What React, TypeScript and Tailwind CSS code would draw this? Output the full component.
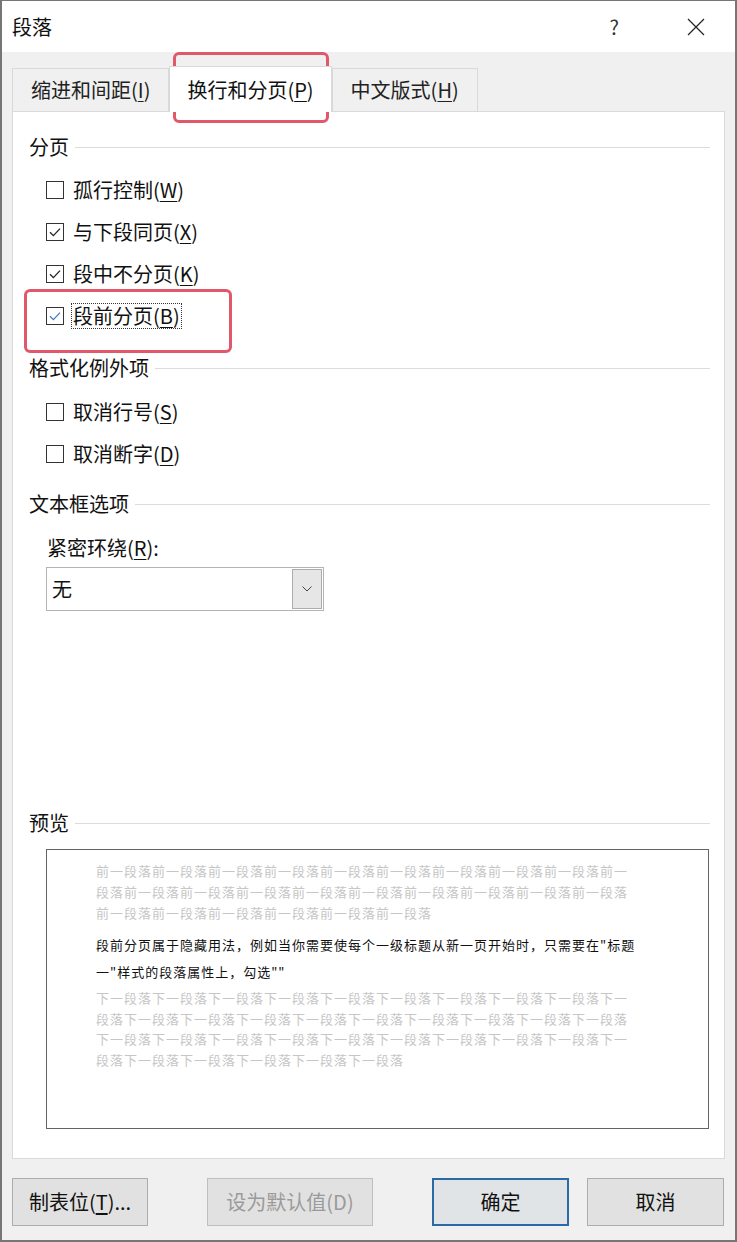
import React from "react";

const font = { fontFamily: '"Microsoft YaHei", "Noto Sans CJK SC", "Noto Sans", sans-serif' };

const before = [
  "前一段落前一段落前一段落前一段落前一段落前一段落前一段落前一段落前一段落前一",
  "段落前一段落前一段落前一段落前一段落前一段落前一段落前一段落前一段落前一段落",
  "前一段落前一段落前一段落前一段落前一段落前一段落",
];
const after = [
  "下一段落下一段落下一段落下一段落下一段落下一段落下一段落下一段落下一段落下一",
  "段落下一段落下一段落下一段落下一段落下一段落下一段落下一段落下一段落下一段落",
  "下一段落下一段落下一段落下一段落下一段落下一段落下一段落下一段落下一段落下一",
  "段落下一段落下一段落下一段落下一段落下一段落",
];

function Label({ text, hot, rest }: { text: string; hot: string; rest?: string }) {
  return (
    <span>
      {text}(<span className="underline underline-offset-[3px] decoration-1">{hot}</span>){rest}
    </span>
  );
}

function GroupHeader({ title }: { title: string }) {
  return (
    <div className="flex items-center h-[28px] pl-[16px] pr-[14px]">
      <span className="text-[20px] leading-none text-[#111]">{title}</span>
      <div className="flex-1 h-px bg-[#dcdcdc] ml-[6px]" />
    </div>
  );
}

function CheckRow({
  checked,
  text,
  hot,
  focused,
}: {
  checked?: boolean;
  text: string;
  hot: string;
  focused?: boolean;
}) {
  return (
    <div className="flex items-center h-[42px] pl-[33px]">
      <div className="w-[18px] h-[18px] border border-[#333] bg-white flex items-center justify-center">
        {checked && (
          <svg width="14" height="14" viewBox="0 0 14 14">
            <path
              d="M2 7.2 L5.4 10.6 L12 3.6"
              fill="none"
              stroke={focused ? "#3f7fb8" : "#222"}
              strokeWidth="1.3"
            />
          </svg>
        )}
      </div>
      <div
        className={`ml-[8px] text-[20px] leading-none text-[#111] px-[1px] py-[2px] ${
          focused ? "outline-1 outline-dotted outline-[#333]" : ""
        }`}
      >
        <Label text={text} hot={hot} />
      </div>
    </div>
  );
}

function Tab({ children, active }: { children: React.ReactNode; active?: boolean }) {
  return (
    <div
      className={
        active
          ? "h-[46px] -mb-px bg-white border border-b-0 border-[#d9d9d9] flex items-center justify-center px-[17px] text-[20px] leading-none z-10"
          : "h-[43px] bg-[#f0f0f0] border border-b-0 border-[#d9d9d9] flex items-center justify-center px-[18px] text-[20px] leading-none text-[#222]"
      }
    >
      {children}
    </div>
  );
}

export default function App() {
  return (
    <div style={font} className="relative w-[737px] h-[1242px] bg-[#f0f0f0] border-t border-l-2 border-r-2 border-b-2 border-[#767676] overflow-hidden text-[#111]">
      {/* title bar */}
      <div className="h-[51px] bg-white flex items-center pl-[10px]">
        <span className="text-[20px] leading-none">段落</span>
        <span className="ml-auto text-[20px] leading-none text-[#333] mr-[68px]">?</span>
        <svg width="18" height="18" viewBox="0 0 18 18" className="mr-[30px]">
          <path d="M1 1 L17 17 M17 1 L1 17" stroke="#222" strokeWidth="1.2" />
        </svg>
      </div>

      {/* tabs */}
      <div className="flex items-end pt-[16px] pl-[10px] h-[59px]">
        <Tab>
          <Label text="缩进和间距" hot="I" />
        </Tab>
        <Tab active>
          <Label text="换行和分页" hot="P" />
        </Tab>
        <Tab>
          <Label text="中文版式" hot="H" />
        </Tab>
      </div>

      {/* panel */}
      <div className="mx-[10px] bg-white border border-[#d9d9d9] h-[1048px] pt-[21px]">
        <GroupHeader title="分页" />
        <div className="mt-[8px]">
          <CheckRow text="孤行控制" hot="W" />
          <CheckRow checked text="与下段同页" hot="X" />
          <CheckRow checked text="段中不分页" hot="K" />
          <CheckRow checked focused text="段前分页" hot="B" />
        </div>

        <div className="mt-[17px]">
          <GroupHeader title="格式化例外项" />
        </div>
        <div className="mt-[9px]">
          <CheckRow text="取消行号" hot="S" />
          <CheckRow text="取消断字" hot="D" />
        </div>

        <div className="mt-[15px]">
          <GroupHeader title="文本框选项" />
        </div>
        <div className="mt-[16px] h-[28px] flex items-center pl-[34px] text-[20px] leading-none">
          <Label text="紧密环绕" hot="R" rest=":" />
        </div>
        <div className="mt-[5px] ml-[33px] w-[278px] h-[44px] border border-[#b4b4b4] bg-white flex items-center p-[1px]">
          <span className="pl-[4px] text-[20px] leading-none">无</span>
          <div className="ml-auto w-[30px] h-full bg-[#e6e6e6] border border-[#acacac] flex items-center justify-center">
            <svg width="10" height="6" viewBox="0 0 10 6">
              <path d="M0.5 0.5 L5 5 L9.5 0.5" fill="none" stroke="#444" strokeWidth="1" />
            </svg>
          </div>
        </div>

        <div className="mt-[198px]">
          <GroupHeader title="预览" />
        </div>
        <div className="mt-[12px] ml-[33px] w-[663px] h-[280px] border border-[#646464] bg-white pl-[49px] pt-[10px]">
          <div className="text-[13px] tracking-[1px] leading-[21px] text-[#c6c6c6] whitespace-nowrap">
            {before.map((l, i) => (
              <div key={i}>{l}</div>
            ))}
          </div>
          <div className="mt-[8px] text-[13px] tracking-[1px] leading-[27px] text-[#111] whitespace-nowrap">
            <div>段前分页属于隐藏用法，例如当你需要使每个一级标题从新一页开始时，只需要在"标题</div>
            <div>一"样式的段落属性上，勾选""</div>
          </div>
          <div className="mt-[3px] text-[13px] tracking-[1px] leading-[20.7px] text-[#c6c6c6] whitespace-nowrap">
            {after.map((l, i) => (
              <div key={i}>{l}</div>
            ))}
          </div>
        </div>
      </div>

      {/* buttons */}
      <div className="flex mt-[19px] pl-[10px] text-[20px] leading-none">
        <div className="w-[136px] h-[48px] bg-[#e1e1e1] border border-[#adadad] flex items-center justify-center">
          <span>
            制表位(<span className="underline underline-offset-[3px]">T</span>)...
          </span>
        </div>
        <div className="ml-[59px] w-[166px] h-[48px] bg-[#e1e1e1] border border-[#bfbfbf] flex items-center justify-center text-[#9a9a9a]">
          设为默认值(D)
        </div>
        <div className="ml-[59px] w-[137px] h-[48px] bg-[#e1e4e7] border-2 border-[#2b6aa5] flex items-center justify-center">
          确定
        </div>
        <div className="ml-[18px] w-[137px] h-[48px] bg-[#e1e1e1] border border-[#adadad] flex items-center justify-center">
          取消
        </div>
      </div>

      {/* red annotation boxes */}
      <div className="absolute left-[171px] top-[51px] w-[156px] h-[71px] border-[3px] border-[#e0596b] rounded-[6px] pointer-events-none" />
      <div className="absolute left-[22px] top-[288px] w-[208px] h-[64px] border-[3px] border-[#e0596b] rounded-[6px] pointer-events-none" />
    </div>
  );
}
